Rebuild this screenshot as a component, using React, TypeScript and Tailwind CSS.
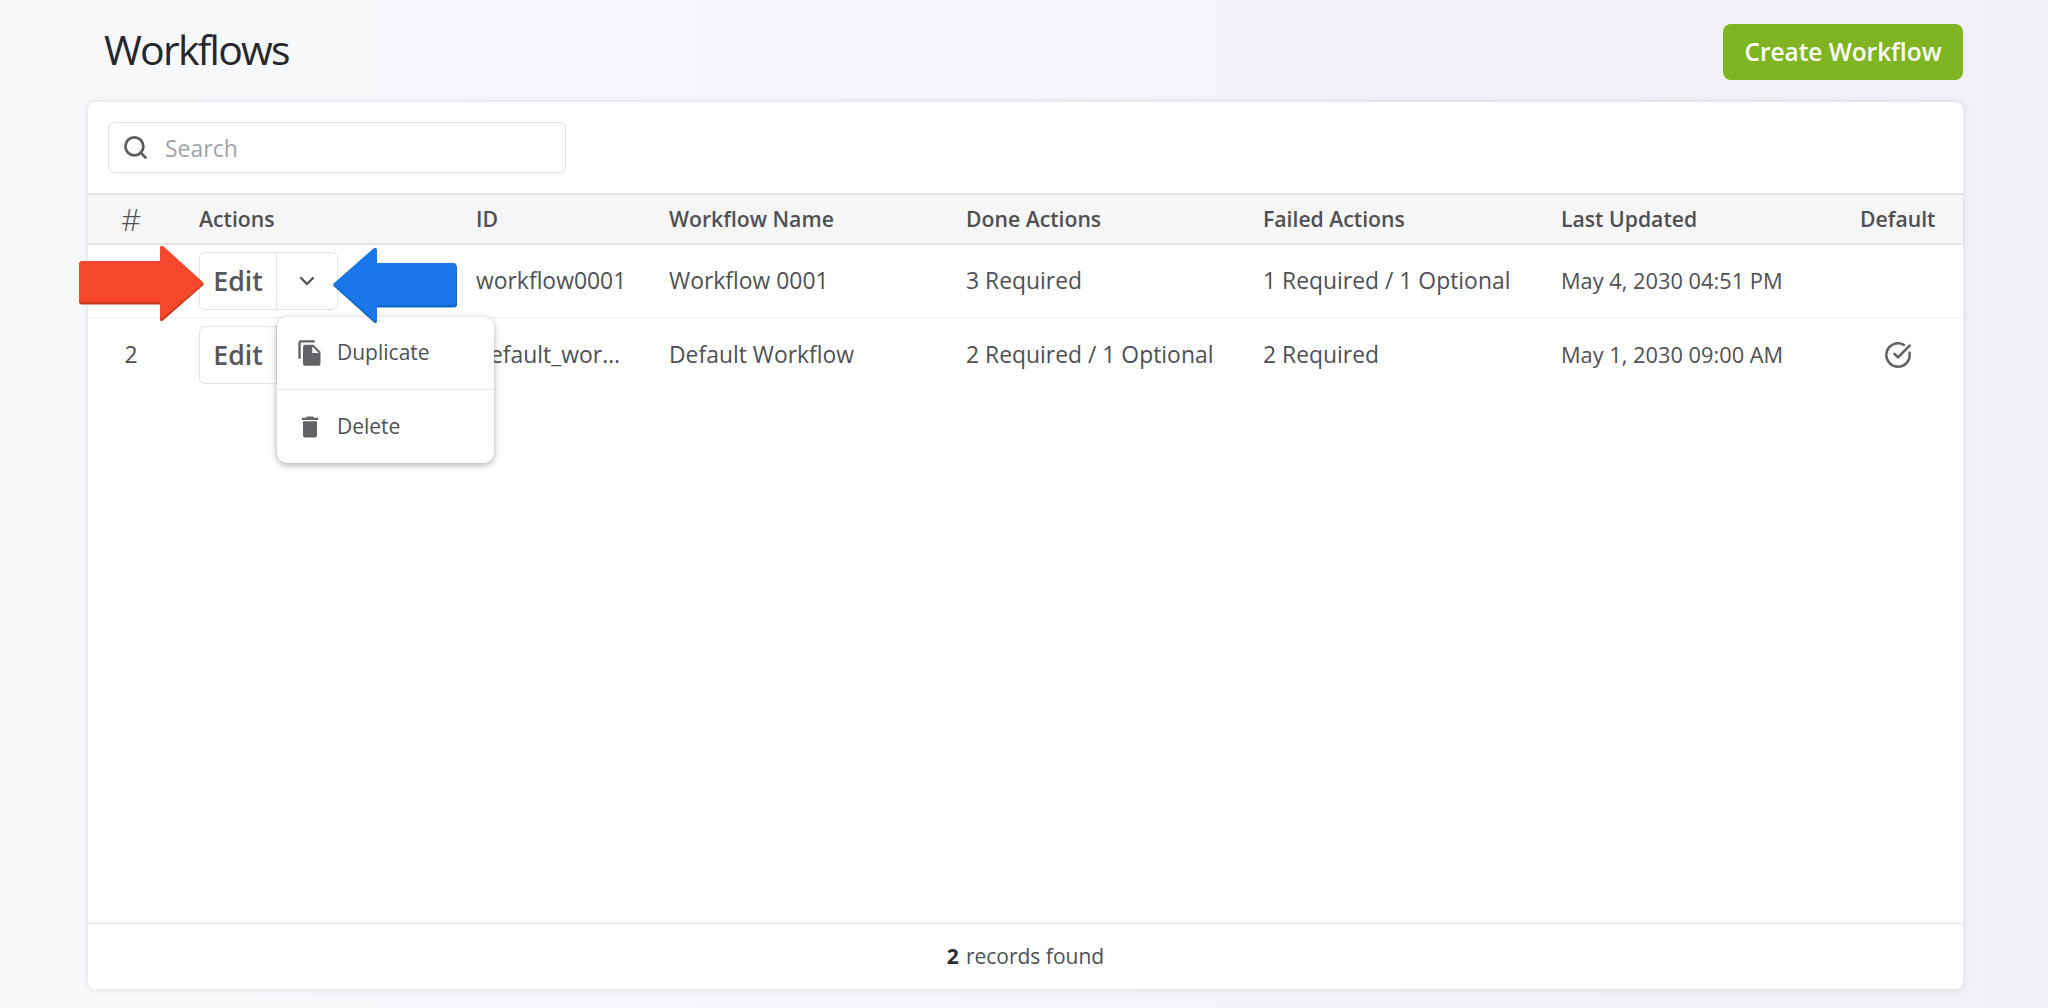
import { ChevronDown, Search, CircleCheckBig } from 'lucide-react'

const rows = [
  { n: '', id: 'workflow0001', name: 'Workflow 0001', done: '3 Required', failed: '1 Required / 1 Optional', updated: 'May 4, 2030 04:51 PM', isDefault: false },
  { n: '2', id: 'default_workflow', name: 'Default Workflow', done: '2 Required / 1 Optional', failed: '2 Required', updated: 'May 1, 2030 09:00 AM', isDefault: true },
]

const cols = 'grid grid-cols-[111px_277px_193px_297px_297px_298px_299px_1fr] items-center'

function EditButton() {
  return (
    <div className="flex h-[58px] w-[139px] items-stretch rounded-[6px] border border-[#e4e5e7] bg-white">
      <span className="flex w-[77px] items-center justify-center border-r border-[#e4e5e7] text-[26.7px] font-semibold text-[#56575a]">Edit</span>
      <span className="flex flex-1 items-center justify-center text-[#55565a]">
        <ChevronDown size={24} strokeWidth={2.4} />
      </span>
    </div>
  )
}

export default function App() {
  return (
    <div className="relative h-[1008px] overflow-hidden bg-gradient-to-r from-[#f8f9fb] to-[#eff1f6] font-['Open_Sans',sans-serif] text-[#4f5053]">
      <div className="flex h-[102px] items-start justify-between pl-[104px] pr-[85px] pt-[24px]">
        <h1 className="-mt-[1px] text-[41px] leading-[52px] tracking-[-1.8px] text-[#25272b]">Workflows</h1>
        <button className="h-[56px] w-[240px] rounded-[8px] bg-[#7fb522] text-[24.4px] font-semibold text-white">Create Workflow</button>
      </div>

      <div className="relative mx-[85px] ml-[88px] flex h-[887px] flex-col rounded-[8px] bg-white shadow-[0_0_6px_rgba(60,70,100,0.16)]">
        <div className="flex h-[91px] items-center px-[20px]">
          <div className="flex h-[51px] w-[458px] items-center rounded-[6px] border border-[#e2e3e6] pl-[13px]">
            <Search size={27} strokeWidth={2.4} className="text-[#5b5c60]" />
            <span className="ml-[16px] mt-[2px] text-[23px] text-[#a3a4a8]">Search</span>
          </div>
        </div>

        <div className={`${cols} h-[52px] border-y-2 border-[#e2e3e5] bg-[#f6f6f7] text-[21.2px] font-semibold`}>
          <span className="w-[86px] text-center text-[31px] font-light">#</span>
          <span>Actions</span>
          <span>ID</span>
          <span>Workflow Name</span>
          <span>Done Actions</span>
          <span>Failed Actions</span>
          <span>Last Updated</span>
          <span>Default</span>
        </div>

        {rows.map((r, i) => (
          <div key={i} className={`${cols} text-[22.9px] ${i === 0 ? 'h-[73px] border-b border-[#f1f1f3]' : 'h-[74px]'}`}>
            <span className="w-[86px] text-center">{r.n}</span>
            <EditButton />
            <span className="truncate pr-[40px]">{r.id}</span>
            <span>{r.name}</span>
            <span>{r.done}</span>
            <span>{r.failed}</span>
            <span className="text-[21.8px]">{r.updated}</span>
            <span className="flex w-[76px] justify-center">
              {r.isDefault && <CircleCheckBig size={28} strokeWidth={2.2} className="text-[#606165]" />}
            </span>
          </div>
        ))}

        <div className="flex-1" />

        <div className="flex h-[66px] items-center justify-center border-t border-[#e6e6e8] text-[21px]">
          <b className="mr-[7px] font-bold text-[#2d2e31]">2</b> records found
        </div>

        {/* menu of the first row */}
        <div className="absolute left-[189px] top-[215px] w-[217px] rounded-[10px] bg-white text-[21px] shadow-[0_2px_7px_rgba(0,0,0,0.32)]">
          <div className="flex h-[73px] items-center border-b border-[#e6e6e8] pl-[19px]">
            <svg viewBox="0 0 24 24" width="28" height="28" fill="#616266">
              <path d="M16 1H4c-1.1 0-2 .9-2 2v14h2V3h12V1zm-1 4l6 6v10c0 1.1-.9 2-2 2H7.99C6.89 23 6 22.1 6 21l.01-14c0-1.1.89-2 1.99-2h7zm-1 7h5.5L14 6.5V12z" />
            </svg>
            <span className="ml-[13px]">Duplicate</span>
          </div>
          <div className="flex h-[73px] items-center pl-[19px]">
            <svg viewBox="0 0 24 24" width="28" height="28" fill="#616266">
              <path d="M6 19c0 1.1.9 2 2 2h8c1.1 0 2-.9 2-2V7H6v12zM19 4h-3.5l-1-1h-5l-1 1H5v2h14V4z" />
            </svg>
            <span className="ml-[13px]">Delete</span>
          </div>
        </div>
      </div>

      {/* annotation arrows */}
      <svg className="absolute left-[79px] top-[245px]" width="126" height="76" viewBox="0 0 126 76">
        <path d="M3 16H81V3Q81 0 84 1L125 38L84 74Q81 76 81 72V58H3Q0 58 0 55V19Q0 16 3 16Z" fill="#c9371c" transform="translate(0 1.5)" />
        <path d="M3 16H81V3Q81 0 84 1L125 38L84 73Q81 75 81 71V57H3Q0 57 0 54V19Q0 16 3 16Z" fill="#f5472c" />
      </svg>
      <svg className="absolute left-[333px] top-[247px]" width="125" height="76" viewBox="0 0 125 76">
        <path d="M41 1Q44 0 44 4V16H121Q124 16 124 19V56Q124 59 121 59H44V72Q44 76 41 74L0 37Z" fill="#1267c9" transform="translate(0 1.5)" />
        <path d="M41 1Q44 0 44 4V16H121Q123 16 123 19V55Q123 58 121 58H44V72Q44 75 41 73L0 37Z" fill="#1a77ea" />
      </svg>
    </div>
  )
}
